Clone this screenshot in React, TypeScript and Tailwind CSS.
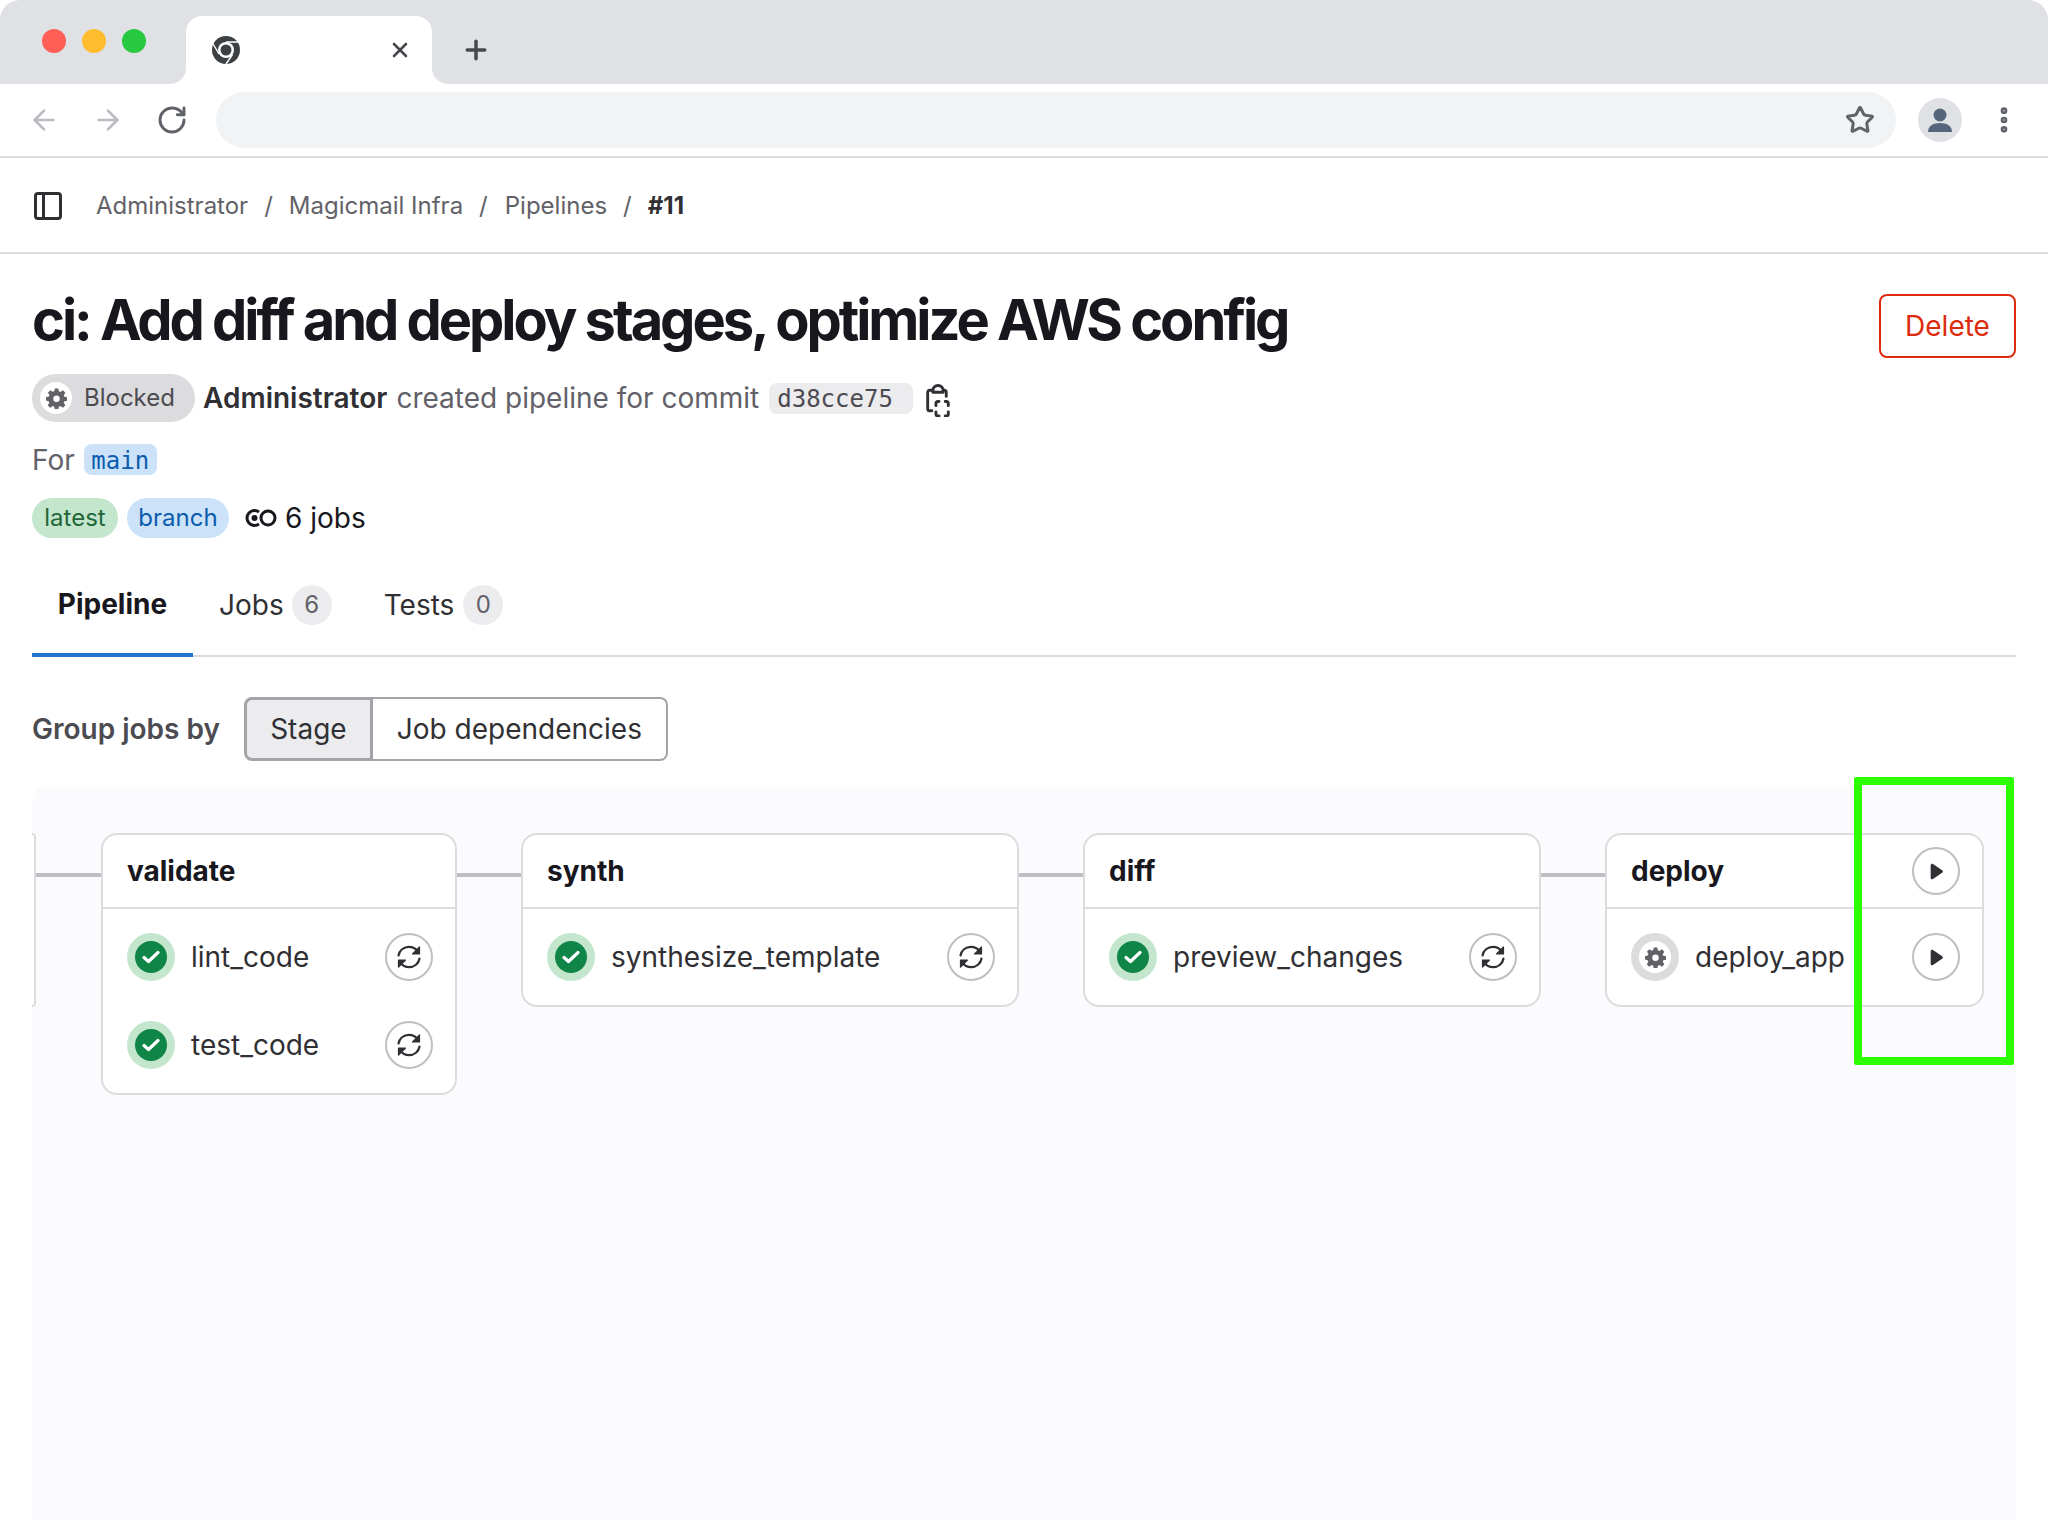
import React from "react";
import { ArrowLeft, ArrowRight, RotateCw, Star, MoreVertical, X, Plus } from "lucide-react";

function ChromeLogo() {
  return (
    <svg width="30" height="30" viewBox="0 0 30 30">
      <circle cx="15" cy="15" r="14" fill="#3c4043" />
      <circle cx="15" cy="15" r="8" fill="#fff" />
      <circle cx="15" cy="15" r="5.5" fill="#3c4043" />
      <path d="M15 7H28M8 19L1.5 8M21.5 19.5L15 29" stroke="#fff" strokeWidth="1.4" fill="none" />
    </svg>
  );
}

function Retry() {
  return (
    <svg width="26" height="26" viewBox="0 0 26 26" fill="none" stroke="#303034" strokeWidth="2.200" strokeLinecap="round" strokeLinejoin="round">
      <path d="M2.500 11.500C3.300 6.400 7.600 2.800 13 2.800c3.600 0 6.800 1.800 8.800 4.500" />
      <path d="M23.500 14.500C22.700 19.600 18.400 23.200 13 23.200c-3.600 0-6.800-1.800-8.800-4.500" />
      <path d="M23.500 3v7h-7z" fill="#303034" strokeWidth="1.200" />
      <path d="M2.500 23v-7h7z" fill="#303034" strokeWidth="1.200" />
    </svg>
  );
}

function Play() {
  return (
    <svg width="15" height="17" viewBox="0 0 14 16">
      <path d="M1.500 2.200C1.500 1 2.700.4 3.700 1l8.600 5.800c.9.6.9 1.800 0 2.400L3.700 15c-1 .6-2.200 0-2.200-1.200z" fill="#303034" />
    </svg>
  );
}

function Gear({ size, color }: { size: number; color: string }) {
  return (
    <svg width={size} height={size} viewBox="0 0 24 24" fill={color} fillRule="evenodd">
      <path d="M10 0.500h4l.7 3.200 1.800.8 2.800-1.800 2.800 2.800-1.800 2.800.7 1.700 3.200.7v3.800l-3.200.7-.7 1.700 1.800 2.800-2.800 2.800-2.800-1.800-1.800.8-.7 3.200h-4l-.6-3.200-1.800-.8-2.800 1.800-2.800-2.800 1.800-2.800-.8-1.700L0 14.300v-3.800l3.200-.7.800-1.700L2.200 5.300 5 2.500l2.800 1.800 1.800-.8zM12 8.700a3.700 3.700 0 1 0 0 7.400 3.700 3.700 0 0 0 0-7.400z" />
    </svg>
  );
}

function Success() {
  return (
    <div className="flex h-12 w-12 shrink-0 items-center justify-center rounded-full bg-[#c3e6cd]">
      <div className="flex h-8 w-8 items-center justify-center rounded-full bg-[#108548]">
        <svg width="18" height="14" viewBox="0 0 18 14" fill="none">
          <path d="M2 7.500l4.500 4L16 2.500" stroke="#fff" strokeWidth="3.200" strokeLinecap="round" strokeLinejoin="round" />
        </svg>
      </div>
    </div>
  );
}

function Manual() {
  return (
    <div className="flex h-12 w-12 shrink-0 items-center justify-center rounded-full bg-[#dcdcde]">
      <div className="flex h-8 w-8 items-center justify-center rounded-full bg-white">
        <Gear size={21} color="#626168" />
      </div>
    </div>
  );
}

function CircleBtn({ children }: { children: React.ReactNode }) {
  return (
    <div className="flex h-12 w-12 shrink-0 items-center justify-center rounded-full border-2 border-[#bfbfc3] bg-white">
      {children}
    </div>
  );
}

function Job({ name, manual }: { name: string; manual?: boolean }) {
  return (
    <div className="flex h-12 items-center">
      {manual ? <Manual /> : <Success />}
      <span className="ml-4 grow text-[28px] text-[#303034]">{name}</span>
      <CircleBtn>{manual ? <Play /> : <Retry />}</CircleBtn>
    </div>
  );
}

function Stage({ title, jobs, width, manual }: { title: string; jobs: string[]; width: string; manual?: boolean }) {
  return (
    <div className={`${width} shrink-0 rounded-2xl border-2 border-[#dcdcde] bg-white`}>
      <div className="flex h-[74px] items-center justify-between border-b-2 border-[#dcdcde] pl-6 pr-[22px]">
        <span className="text-[28px] font-bold text-[#18171d]">{title}</span>
        {manual && <CircleBtn><Play /></CircleBtn>}
      </div>
      <div className="flex flex-col gap-10 pb-[24px] pl-6 pr-[22px] pt-[24px]">
        {jobs.map((j) => (
          <Job key={j} name={j} manual={manual} />
        ))}
      </div>
    </div>
  );
}

function Connector() {
  return <div className="mt-[40px] h-1 w-[64px] shrink-0 bg-[#bfbfc3]" />;
}

export default function App() {
  return (
    <div className="relative h-[1520px] w-[2048px] overflow-hidden bg-white font-['Inter',sans-serif] text-[#303034]">
      {/* browser chrome */}
      <div className="flex h-[84px] rounded-t-[20px] bg-[#dfe1e5]">
        <div className="flex items-center gap-4 pb-[2px] pl-[42px] pr-[40px]">
          <span className="h-6 w-6 rounded-full bg-[#ff5f57]" />
          <span className="h-6 w-6 rounded-full bg-[#ffbd2e]" />
          <span className="h-6 w-6 rounded-full bg-[#28c840]" />
        </div>
        <div className="relative mt-4 flex h-[68px] w-[246px] items-center justify-between rounded-t-2xl bg-white pl-[25px] pr-[20px]">
          <div className="absolute -left-4 bottom-0 h-4 w-4 bg-white">
            <div className="h-4 w-4 rounded-br-2xl bg-[#dfe1e5]" />
          </div>
          <ChromeLogo />
          <X size={24} strokeWidth={2.6} color="#45484d" />
          <div className="absolute -right-4 bottom-0 h-4 w-4 bg-white">
            <div className="h-4 w-4 rounded-bl-2xl bg-[#dfe1e5]" />
          </div>
        </div>
        <div className="mt-4 flex h-[68px] items-center pl-[29px]">
          <Plus size={30} strokeWidth={2.8} color="#45484d" />
        </div>
      </div>
      <div className="flex h-[74px] items-center border-b-2 border-[#dadce0] pl-[28px] pr-[28px]">
        <ArrowLeft size={32} strokeWidth={2} color="#b9bcc0" />
        <ArrowRight size={32} strokeWidth={2} color="#b9bcc0" className="ml-[32px]" />
        <RotateCw size={32} strokeWidth={2.2} color="#5f6368" className="ml-[32px]" />
        <div className="ml-[28px] flex h-14 w-[1680px] items-center justify-end rounded-full bg-[#f1f3f4] pr-[21px]">
          <Star size={30} strokeWidth={2.4} color="#5f6368" />
        </div>
        <div className="ml-[22px] flex h-11 w-11 items-center justify-center rounded-full bg-[#dfe1e5]">
          <svg width="26" height="26" viewBox="0 0 26 26" fill="#56657c">
            <circle cx="13" cy="8" r="6.500" />
            <path d="M1 25c0-6 5-9 12-9s12 3 12 9z" />
          </svg>
        </div>
        <MoreVertical size={32} strokeWidth={3} color="#5f6368" className="ml-[26px]" />
      </div>

      {/* breadcrumb */}
      <div className="flex h-[96px] items-center gap-4 border-b-2 border-[#dcdcde] pl-[34px] pt-[2px] text-[24px] text-[#626168]">
        <svg width="28" height="28" viewBox="0 0 28 28" fill="none" stroke="#303034" strokeWidth="3">
          <rect x="1.500" y="1.500" width="25" height="25" rx="2.500" />
          <path d="M9.500 1.500v25" />
        </svg>
        <span className="ml-[18px]">Administrator</span>
        <span>/</span>
        <span>Magicmail Infra</span>
        <span>/</span>
        <span className="ml-[1px]">Pipelines</span>
        <span>/</span>
        <span className="font-bold text-[#303034]">#11</span>
      </div>

      <div className="px-8">
        {/* title */}
        <div className="flex items-start justify-between pt-[40px]">
          <h1 className="text-[56px] font-bold leading-[52px] tracking-[-0.0545em] text-[#18171d]">ci: Add diff and deploy stages, optimize AWS config</h1>
          <button className="h-[64px] w-[137px] rounded-lg border-2 border-[#dd2b0e] text-[28px] text-[#dd2b0e]">Delete</button>
        </div>

        {/* meta */}
        <div className="mt-4 flex h-12 items-center text-[28px] text-[#626168]">
          <span className="flex h-12 w-[163px] items-center rounded-full bg-[#dcdcde] pl-2 text-[24px] text-[#4c4b51]">
            <span className="flex h-8 w-8 items-center justify-center rounded-full bg-white">
              <Gear size={21} color="#626168" />
            </span>
            <span className="ml-3">Blocked</span>
          </span>
          <span className="ml-2 font-semibold text-[#303034]">Administrator</span>
          <span className="ml-[9px]">created pipeline for commit</span>
          <span className="ml-[10px] flex h-[31px] w-[144px] items-center rounded-lg bg-[#ececef] pl-2 pt-[2px] font-['DejaVu_Sans_Mono',monospace] text-[24px] text-[#4c4b51]">d38cce75</span>
          <svg className="ml-[12px] mt-[4px]" width="26" height="33" viewBox="0 0 24 32" fill="none" stroke="#303034" strokeWidth="2.800" strokeLinecap="round" strokeLinejoin="round">
            <path d="M7 6H4a2 2 0 0 0-2 2v16a2 2 0 0 0 2 2h2" />
            <path d="M17 6h1a2 2 0 0 1 2 2v4" />
            <path d="M7 8V6c0-2 2-4.500 5-4.500S17 4 17 6v2z" />
            <path d="M10 21v-2a2 2 0 0 1 2-2h1M19 17h1a2 2 0 0 1 2 2v2M22 27v2a2 2 0 0 1-2 2h-1M13 31h-1a2 2 0 0 1-2-2v-2" />
          </svg>
        </div>

        {/* For */}
        <div className="mt-[22px] flex h-[31px] items-center text-[28px] text-[#626168]">
          <span>For</span>
          <span className="ml-[9px] flex h-[31px] w-[73px] items-center justify-center rounded-lg bg-[#cbe2f9] pt-[2px] font-['DejaVu_Sans_Mono',monospace] text-[24px] text-[#0b5cad]">main</span>
        </div>

        {/* badges */}
        <div className="mt-[23px] flex h-10 items-center text-[24px]">
          <span className="flex h-10 w-[86px] items-center justify-center rounded-full bg-[#c3e6cd] text-[#24663b]">latest</span>
          <span className="ml-[9px] flex h-10 w-[102px] items-center justify-center rounded-full bg-[#cbe2f9] text-[#0b5cad]">branch</span>
          <svg className="ml-4" width="32" height="20" viewBox="0 0 32 20" fill="none" stroke="#18171d" strokeWidth="3">
            <path d="M14 4a7.500 7.500 0 1 0 0 12" />
            <circle cx="9.500" cy="10" r="3" fill="#18171d" stroke="none" />
            <circle cx="23" cy="10" r="7" />
          </svg>
          <span className="ml-2 text-[28px] text-[#18171d]">6 jobs</span>
        </div>

        {/* tabs */}
        <div className="mt-[22px] flex h-[97px] items-stretch border-b-2 border-[#dcdcde] text-[28px]">
          <div className="-mb-[2px] flex w-[161px] items-center justify-center border-b-4 border-[#1f75cb] pb-[5px] font-bold text-[#18171d]">Pipeline</div>
          <div className="ml-[26px] flex items-center pb-[5px]">
            <span>Jobs</span>
            <span className="ml-[8px] flex h-10 w-10 items-center justify-center rounded-full bg-[#ececef] text-[24px] text-[#626168]">6</span>
          </div>
          <div className="ml-[52px] flex items-center pb-[5px]">
            <span>Tests</span>
            <span className="ml-[9px] flex h-10 w-10 items-center justify-center rounded-full bg-[#ececef] text-[24px] text-[#626168]">0</span>
          </div>
        </div>

        {/* group */}
        <div className="mt-10 flex h-16 items-center text-[28px]">
          <span className="font-semibold text-[#4c4b51]">Group jobs by</span>
          <div className="ml-6 flex h-16">
            <div className="flex w-[129px] items-center justify-center rounded-l-lg border-[3px] border-[#a4a3a8] bg-[#ececef]">Stage</div>
            <div className="flex w-[295px] items-center justify-center rounded-r-lg border-2 border-l-0 border-[#a4a3a8]">Job dependencies</div>
          </div>
        </div>

        {/* graph */}
        <div className="mt-6 flex h-[800px] items-start overflow-hidden rounded-2xl bg-[#fbfafd] pt-12">
          <div className="h-[174px] w-1 shrink-0 rounded-r-2xl border-2 border-l-0 border-[#dcdcde] bg-white" />
          <div className="mt-[40px] h-1 w-[65px] shrink-0 bg-[#bfbfc3]" />
          <Stage title="validate" jobs={["lint_code", "test_code"]} width="w-[356px]" />
          <Connector />
          <Stage title="synth" jobs={["synthesize_template"]} width="w-[498px]" />
          <Connector />
          <Stage title="diff" jobs={["preview_changes"]} width="w-[458px]" />
          <Connector />
          <Stage title="deploy" jobs={["deploy_app"]} width="w-[379px]" manual />
        </div>
      </div>

      {/* highlight */}
      <div className="absolute left-[1854px] top-[777px] h-[288px] w-[160px] rounded-[2px] border-[8px] border-[#2bff00]" />
    </div>
  );
}
